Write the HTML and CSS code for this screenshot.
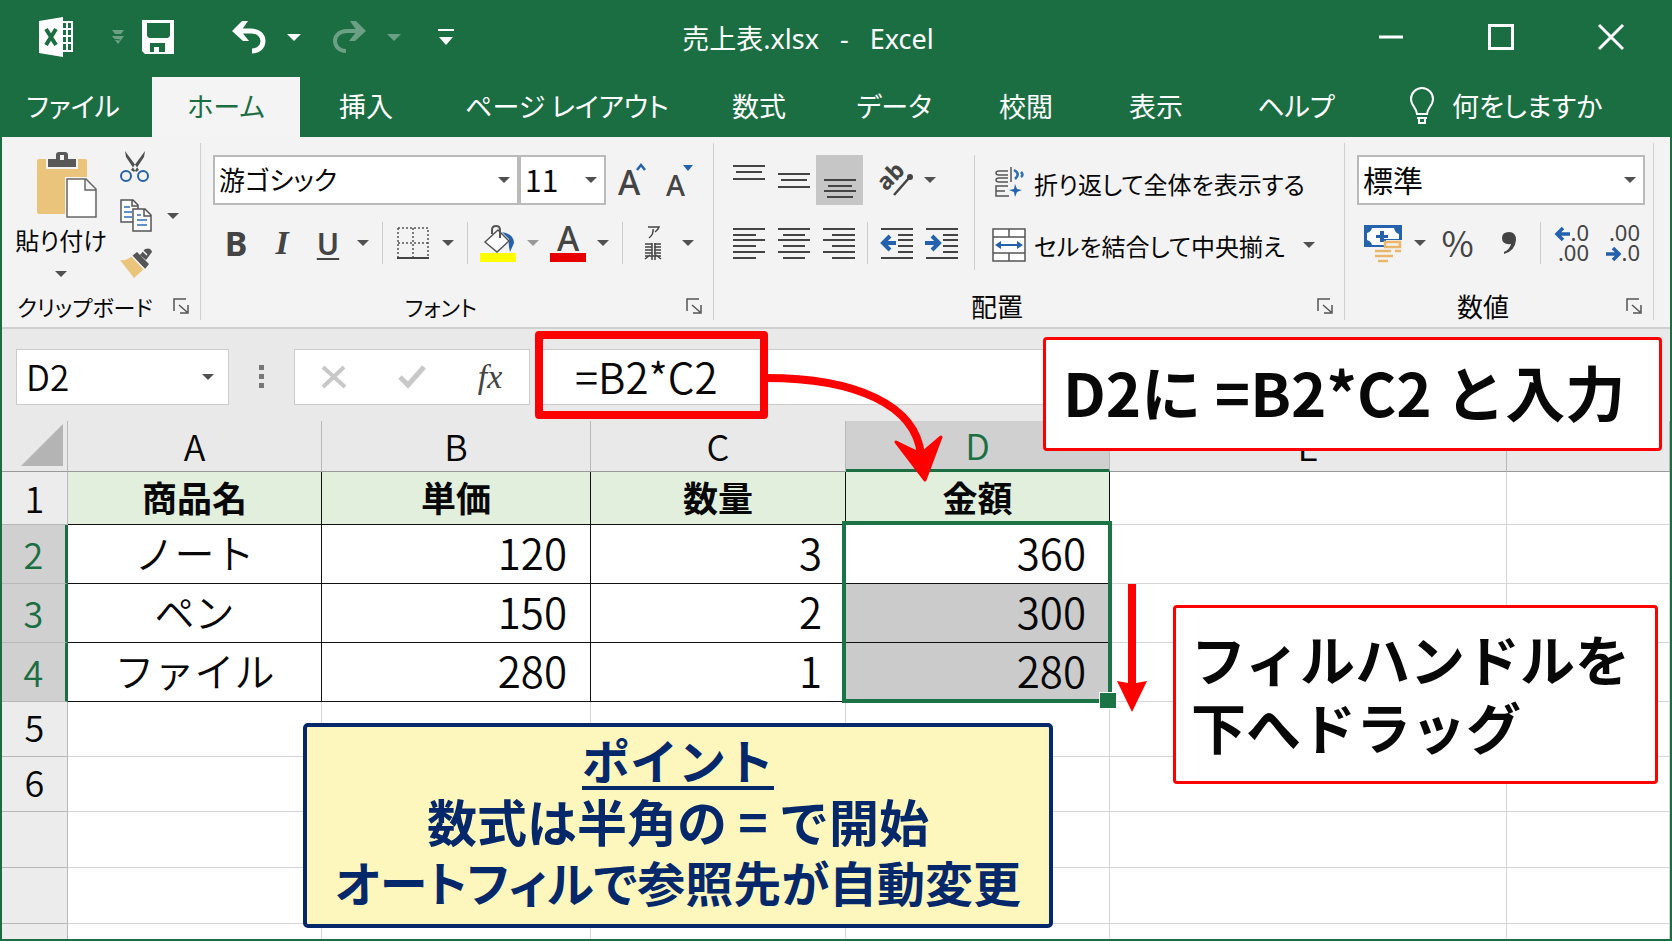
FILE: index.html
```
<!DOCTYPE html>
<html lang="ja">
<head>
    <meta charset="UTF-8">
    <meta name="viewport" content="width=device-width, initial-scale=1.0">
    <title>売上表.xlsx - Excel</title>
    <link rel="stylesheet" href="styles.css">
</head>
<body>
    <div class="app">
        <header class="titlebar">
            <div class="quick-access">
                <svg class="excel-logo" width="34" height="40" viewBox="0 0 34 40">
                    <path fill="#fff" d="M0 4L24 0v40L0 36z"/>
                    <path fill="none" stroke="#fff" stroke-width="2" d="M24 5h9v29h-9M28 5v29M24 12h8M24 19h8M24 26h8"/>
                    <path fill="none" stroke="#1b6e42" stroke-width="4" d="M7 12l10 16M17 12L7 28"/>
                </svg>
                <svg class="faint" width="14" height="16" viewBox="0 0 14 16">
                    <path fill="#fff" d="M1 1h12l-3 4H4zM1 7h12l-6 8z"/>
                    <path stroke="#1b6e42" d="M1 10l8 1"/>
                </svg>
                <button type="button" class="qa-btn save" aria-label="上書き保存">
                    <svg width="34" height="34" viewBox="0 0 34 34">
                        <path fill="#fff" fill-rule="evenodd" d="M1 0h32v34H4l-3-3zM6 3v13l2 2h19l2-2V3zM9 23v9h4v-5h5v5h6v-9z"/>
                    </svg>
                </button>
                <button type="button" class="qa-btn undo" aria-label="元に戻す">
                    <svg width="34" height="34" viewBox="0 0 34 34">
                        <path fill="none" stroke="#fff" stroke-width="5" d="M4 11h15c8 0 12 5 12 10s-4 10-11 10"/>
                        <path fill="#fff" d="M0 11L10 1h6l-7 10 8 10h-6z"/>
                    </svg>
                </button>
                <button type="button" class="caret light" aria-label="元に戻すの一覧"></button>
                <button type="button" class="qa-btn redo faint" aria-label="やり直し">
                    <svg width="34" height="34" viewBox="0 0 34 34">
                        <path fill="none" stroke="#fff" stroke-width="4" d="M30 11H15C7 11 3 16 3 21s4 10 11 10"/>
                        <path fill="#fff" d="M34 11L24 1h-6l7 10-8 10h6z"/>
                    </svg>
                </button>
                <button type="button" class="caret light faint" aria-label="やり直しの一覧"></button>
                <button type="button" class="qa-btn customize" aria-label="クイック アクセスのカスタマイズ">
                    <svg width="16" height="18" viewBox="0 0 16 18"><path fill="#fff" d="M0 1h16v2H0zM1 9h14l-7 8z"/></svg>
                </button>
            </div>
            <h1 class="doc-title">売上表.xlsx&nbsp;&nbsp; -&nbsp;&nbsp; Excel</h1>
            <div class="window-controls">
                <button type="button" aria-label="最小化">
                    <svg width="26" height="26" viewBox="0 0 26 26"><path stroke="#fff" stroke-width="3" d="M1 13h24"/></svg>
                </button>
                <button type="button" aria-label="最大化">
                    <svg width="26" height="26" viewBox="0 0 26 26"><rect x="1.5" y="1.5" width="23" height="23" fill="none" stroke="#fff" stroke-width="3"/></svg>
                </button>
                <button type="button" aria-label="閉じる">
                    <svg width="26" height="26" viewBox="0 0 26 26"><path stroke="#fff" stroke-width="3" d="M1 1l24 24M25 1L1 25"/></svg>
                </button>
            </div>
        </header>

        <nav class="tabs">
            <a href="#file" class="file">ファイル</a>
            <a href="#home" class="active">ホーム</a>
            <a href="#insert">挿入</a>
            <a href="#layout">ページ レイアウト</a>
            <a href="#formulas">数式</a>
            <a href="#data">データ</a>
            <a href="#review">校閲</a>
            <a href="#view">表示</a>
            <a href="#help">ヘルプ</a>
            <a href="#tellme" class="tell-me">
                <svg width="24" height="38" viewBox="0 0 24 38" fill="none" stroke="#fff" stroke-width="2">
                    <path d="M7 27c0-6-6-8-6-15a11 11 0 0 1 22 0c0 7-6 9-6 15zM7 31h10M9 32v4h6v-4"/>
                </svg>
                何をしますか
            </a>
        </nav>

        <div class="ribbon">
            <section class="group clipboard">
                <div class="clip-tools">
                    <button type="button" class="paste">
                        <svg width="60" height="66" viewBox="0 0 60 66">
                            <rect x="0" y="7" width="50" height="55" rx="2" fill="#ebc47c"/>
                            <path fill="#f3f3f3" d="M9 5h32v12H9zM28 25h32v41H28z"/>
                            <path fill="#595959" fill-rule="evenodd" d="M11 7h8V3q0-3 3-3h6q3 0 3 3v4h8v8H11zM23 3v5h4V3z"/>
                            <path fill="#fff" stroke="#666" stroke-width="1.5" d="M30 27h19l10 10v28H30zM48 27v11h11"/>
                        </svg>
                        <span>貼り付け</span>
                        <i class="tri"></i>
                    </button>
                    <div class="clip-side">
                        <button type="button" aria-label="切り取り">
                            <svg width="30" height="32" viewBox="0 0 30 32">
                                <path fill="#505050" d="M5 0l14 19-3 2L6 6zM25 0L11 19l3 2L24 6z"/>
                                <circle cx="6" cy="25" r="5" fill="none" stroke="#2562ad" stroke-width="2"/>
                                <circle cx="23" cy="25" r="5" fill="none" stroke="#2562ad" stroke-width="2"/>
                            </svg>
                        </button>
                        <div class="copy-row">
                            <button type="button" aria-label="コピー">
                                <svg width="32" height="33" viewBox="0 0 32 33">
                                    <path fill="#fff" stroke="#555" stroke-width="1.5" d="M1 1h12l5 5v17H1zM12 1v6h6"/>
                                    <path stroke="#2f6eb5" stroke-width="1.5" d="M4 8h6M4 13h8M4 18h8"/>
                                    <path fill="#fff" stroke="#555" stroke-width="1.5" d="M13 10h12l6 6v16H13zM24 10v7h7"/>
                                    <path stroke="#2f6eb5" stroke-width="1.5" d="M17 16h4M17 21h10M17 26h10"/>
                                </svg>
                            </button>
                            <button type="button" class="caret" aria-label="コピーの種類"></button>
                        </div>
                        <button type="button" aria-label="書式のコピー/貼り付け">
                            <svg width="32" height="30" viewBox="0 0 32 30">
                                <path fill="#ebc47c" d="M0 12q7 1 12-4l12 13-10 9z"/>
                                <path fill="#555" d="M12 8l5-4 12 12-4 5zM20 7l5-6q6-2 7 3l-6 8z"/>
                                <path stroke="#f3f3f3" stroke-width="1.5" d="M11 7l14 15M23 3l4 4"/>
                            </svg>
                        </button>
                    </div>
                </div>
                <div class="group-footer">
                    <span>クリップボード</span>
                    <button type="button" class="launcher" aria-label="クリップボードの詳細">
                        <svg width="16" height="16" viewBox="0 0 16 16"><path fill="none" stroke="#555" stroke-width="1.5" d="M1 13V1h12M6 7l8 7M15 7v8H7"/></svg>
                    </button>
                </div>
            </section>

            <section class="group font">
                <div class="row">
                    <div class="select-box font-name">
                        <select aria-label="フォント"><option>游ゴシック</option><option>メイリオ</option></select>
                    </div>
                    <div class="select-box font-size">
                        <select aria-label="フォント サイズ"><option>11</option><option>12</option></select>
                    </div>
                    <button type="button" class="icon-btn" aria-label="フォント サイズの拡大">
                        <svg width="32" height="38" viewBox="0 0 32 38">
                            <text x="1" y="34" class="svg-letter" font-size="34">A</text>
                            <path fill="none" stroke="#2562ad" stroke-width="2.5" d="M20 9l4-5 4 5"/>
                        </svg>
                    </button>
                    <button type="button" class="icon-btn" aria-label="フォント サイズの縮小">
                        <svg width="32" height="38" viewBox="0 0 32 38">
                            <text x="3" y="35" class="svg-letter" font-size="29">A</text>
                            <path fill="#2562ad" d="M20 4h10l-5 6z"/>
                        </svg>
                    </button>
                </div>
                <div class="row">
                    <button type="button" class="icon-btn bold">B</button>
                    <button type="button" class="icon-btn italic">I</button>
                    <button type="button" class="icon-btn underline">U</button>
                    <button type="button" class="caret" aria-label="下線の種類"></button>
                    <i class="sep"></i>
                    <button type="button" class="icon-btn" aria-label="罫線">
                        <svg width="32" height="33" viewBox="0 0 32 33">
                            <path fill="none" stroke="#555" stroke-width="1.5" stroke-dasharray="2 2" d="M1 1h30v30M1 1v30M16 1v30M1 16h30"/>
                            <path stroke="#444" stroke-width="2" d="M0 31h32"/>
                        </svg>
                    </button>
                    <button type="button" class="caret" aria-label="罫線の種類"></button>
                    <i class="sep"></i>
                    <button type="button" class="icon-btn" aria-label="塗りつぶしの色">
                        <svg width="36" height="37" viewBox="0 0 36 37">
                            <path fill="#ff0" d="M0 28h36v9H0z"/>
                            <path fill="#2562ad" d="M22 7q12 2 12 11l-4 9q-2-9-1-13z"/>
                            <path fill="#fff" stroke="#555" stroke-width="1.5" d="M5 17L18 5l11 11-12 11z"/>
                            <path fill="none" stroke="#555" stroke-width="2" d="M12 9V5q0-4 4-4t4 4v8"/>
                        </svg>
                    </button>
                    <button type="button" class="caret dim" aria-label="塗りつぶしの色の一覧"></button>
                    <button type="button" class="icon-btn" aria-label="フォントの色">
                        <svg width="36" height="37" viewBox="0 0 36 37">
                            <path fill="#e80000" d="M0 28h36v9H0z"/>
                            <text x="7" y="26" class="svg-letter" font-size="34">A</text>
                        </svg>
                    </button>
                    <button type="button" class="caret" aria-label="フォントの色の一覧"></button>
                    <i class="sep"></i>
                    <button type="button" class="icon-btn" aria-label="ふりがなの表示">
                        <svg width="18" height="36" viewBox="0 0 18 36" fill="none" stroke="#444" stroke-width="1.5">
                            <path d="M4 2h11q-1 3-4 5M9 4q1 5-4 9"/>
                            <path d="M1 19h7M1 22h7M1 25h7M1 28h7M10 19h7M10 22h7M10 25h7M10 28h7M8 18v17M11 18v17M1 34l5-4M17 34l-5-4M1 31h16"/>
                        </svg>
                    </button>
                    <button type="button" class="caret" aria-label="ふりがなの設定"></button>
                </div>
                <div class="group-footer">
                    <span>フォント</span>
                    <button type="button" class="launcher" aria-label="フォントの詳細">
                        <svg width="16" height="16" viewBox="0 0 16 16"><path fill="none" stroke="#555" stroke-width="1.5" d="M1 13V1h12M6 7l8 7M15 7v8H7"/></svg>
                    </button>
                </div>
            </section>

            <section class="group align">
                <div class="align-tools">
                    <div class="align-left">
                        <div class="row">
                            <button type="button" class="icon-btn" aria-label="上揃え">
                                <svg width="32" height="40" viewBox="0 0 32 40"><path class="lines" d="M0 6h32M3 12h26M0 19h32"/></svg>
                            </button>
                            <button type="button" class="icon-btn" aria-label="上下中央揃え">
                                <svg width="32" height="40" viewBox="0 0 32 40"><path class="lines" d="M0 14h32M3 20h26M0 27h32"/></svg>
                            </button>
                            <button type="button" class="icon-btn pressed" aria-label="下揃え">
                                <svg width="32" height="40" viewBox="0 0 32 40"><path class="lines" d="M0 20h32M4 26h24M0 31h32M3 37h26"/></svg>
                            </button>
                            <button type="button" class="icon-btn orient" aria-label="方向">
                                <svg width="36" height="32" viewBox="0 0 36 32">
                                    <text x="4" y="26" class="svg-letter heavy" font-size="23" transform="rotate(-45 8 22)">ab</text>
                                    <path stroke="#444" stroke-width="2.5" d="M16 31l15-17"/>
                                    <circle cx="32" cy="13" r="3" fill="#444"/>
                                </svg>
                            </button>
                            <button type="button" class="caret" aria-label="方向の一覧"></button>
                        </div>
                        <div class="row">
                            <button type="button" class="icon-btn" aria-label="左揃え">
                                <svg width="32" height="32" viewBox="0 0 32 32"><path class="lines" d="M0 2h32M0 8h23M0 13h32M0 19h23M0 25h32M0 31h23"/></svg>
                            </button>
                            <button type="button" class="icon-btn" aria-label="中央揃え">
                                <svg width="32" height="32" viewBox="0 0 32 32"><path class="lines" d="M0 2h32M5 8h22M0 13h32M5 19h22M0 25h32M5 31h22"/></svg>
                            </button>
                            <button type="button" class="icon-btn" aria-label="右揃え">
                                <svg width="32" height="32" viewBox="0 0 32 32"><path class="lines" d="M0 2h32M9 8h23M0 13h32M9 19h23M0 25h32M9 31h23"/></svg>
                            </button>
                            <i class="sep"></i>
                            <button type="button" class="icon-btn" aria-label="インデントを減らす">
                                <svg width="34" height="32" viewBox="0 0 34 32">
                                    <path class="lines" d="M1 2h32M18 8h15M18 13h15M18 19h15M18 25h15M1 31h32"/>
                                    <path fill="none" stroke="#2562ad" stroke-width="4" d="M16 16H3M10 9l-7 7 7 7"/>
                                </svg>
                            </button>
                            <button type="button" class="icon-btn" aria-label="インデントを増やす">
                                <svg width="34" height="32" viewBox="0 0 34 32">
                                    <path class="lines" d="M1 2h32M18 8h15M18 13h15M18 19h15M18 25h15M1 31h32"/>
                                    <path fill="none" stroke="#2562ad" stroke-width="4" d="M0 16h13M7 9l7 7-7 7"/>
                                </svg>
                            </button>
                        </div>
                    </div>
                    <div class="align-right">
                        <button type="button" class="text-btn">
                            <svg width="34" height="32" viewBox="0 0 34 32" fill="none" stroke="#555" stroke-width="1.5">
                                <path d="M16 4H7q-3 0-3 2t3 2h9M16 11H7q-3 0-3 2t3 2h9M19 0v15M16 19H4v10h13M4 24h9"/>
                                <path stroke="#2f6eb5" stroke-width="2.5" d="M22 3q7 4 1 9M29 5q3 3 0 5"/>
                                <path fill="#2562ad" stroke="none" d="M23 17l2 5 5 1-5 2-2 5-1-5-5-2 5-1z"/>
                            </svg>
                            折り返して全体を表示する
                        </button>
                        <div class="merge-row">
                            <button type="button" class="text-btn">
                                <svg width="34" height="34" viewBox="0 0 34 34">
                                    <path fill="#fff" stroke="#555" stroke-width="1.5" d="M1 1h32v32H1zM1 9h32M1 25h32M17 1v8M17 25v8"/>
                                    <path fill="#2562ad" d="M3 17l6-4v3h16v-3l6 4-6 4v-3H9v3z"/>
                                </svg>
                                セルを結合して中央揃え
                            </button>
                            <button type="button" class="caret" aria-label="結合の種類"></button>
                        </div>
                    </div>
                </div>
                <div class="group-footer">
                    <span>配置</span>
                    <button type="button" class="launcher" aria-label="配置の詳細">
                        <svg width="16" height="16" viewBox="0 0 16 16"><path fill="none" stroke="#555" stroke-width="1.5" d="M1 13V1h12M6 7l8 7M15 7v8H7"/></svg>
                    </button>
                </div>
            </section>

            <section class="group number">
                <div class="row">
                    <div class="select-box number-format">
                        <select aria-label="表示形式"><option>標準</option><option>通貨</option></select>
                    </div>
                </div>
                <div class="row">
                    <button type="button" class="icon-btn" aria-label="通貨表示形式">
                        <svg width="38" height="37" viewBox="0 0 38 37">
                            <path fill="#2562ad" d="M0 0h38v15H22v7H0z"/>
                            <path fill="#fff" d="M8 3h22q1 5 5 6v5H20v6H8q-1-4-5-5V8q4-1 5-5z"/>
                            <path fill="#2562ad" d="M16 6h4v4h4v3h-4v4h-4v-4h-4v-3h4z"/>
                            <path fill="none" stroke="#ebb669" stroke-width="2.5" d="M21 17h15v5H21zM11 26h16M31 26h6M11 31h18M14 36h10"/>
                        </svg>
                    </button>
                    <button type="button" class="caret" aria-label="通貨の一覧"></button>
                    <button type="button" class="icon-btn percent">%</button>
                    <button type="button" class="icon-btn" aria-label="桁区切りスタイル">
                        <svg width="16" height="24" viewBox="0 0 16 24"><path fill="#444" d="M8 1q7 0 7 8-1 11-12 14v-2q6-3 7-8-9 1-9-6 0-6 7-6z"/></svg>
                    </button>
                    <i class="sep"></i>
                    <button type="button" class="icon-btn" aria-label="小数点以下の表示桁数を増やす">
                        <svg width="36" height="38" viewBox="0 0 36 38" class="decimals">
                            <text x="34" y="17" text-anchor="end">.0</text>
                            <text x="34" y="37" text-anchor="end">.00</text>
                            <path fill="none" stroke="#2562ad" stroke-width="3.5" d="M15 10H2M8 4l-6 6 6 6"/>
                        </svg>
                    </button>
                    <button type="button" class="icon-btn" aria-label="小数点以下の表示桁数を減らす">
                        <svg width="36" height="38" viewBox="0 0 36 38" class="decimals">
                            <text x="34" y="17" text-anchor="end">.00</text>
                            <text x="34" y="37" text-anchor="end">.0</text>
                            <path fill="none" stroke="#2562ad" stroke-width="3.5" d="M0 30h13M7 24l6 6-6 6"/>
                        </svg>
                    </button>
                </div>
                <div class="group-footer">
                    <span>数値</span>
                    <button type="button" class="launcher" aria-label="数値の詳細">
                        <svg width="16" height="16" viewBox="0 0 16 16"><path fill="none" stroke="#555" stroke-width="1.5" d="M1 13V1h12M6 7l8 7M15 7v8H7"/></svg>
                    </button>
                </div>
            </section>
        </div>

        <div class="formula-bar">
            <div class="name-box">
                <input type="text" value="D2" aria-label="名前ボックス">
                <button type="button" class="caret" aria-label="名前の一覧"></button>
            </div>
            <div class="grip"><i></i><i></i><i></i></div>
            <div class="formula-actions">
                <button type="button" aria-label="キャンセル">
                    <svg width="24" height="24" viewBox="0 0 24 24"><path stroke="#c8c8c8" stroke-width="4" d="M1 2l22 20M22 2L1 22"/></svg>
                </button>
                <button type="button" aria-label="入力">
                    <svg width="28" height="24" viewBox="0 0 28 24"><path fill="none" stroke="#c8c8c8" stroke-width="5" d="M2 12l8 8L26 2"/></svg>
                </button>
                <button type="button" class="fx" aria-label="関数の挿入">fx</button>
            </div>
            <input type="text" class="formula-input" value="=B2*C2" aria-label="数式バー">
        </div>

        <div class="sheet">
            <table>
                <colgroup>
                    <col class="c-head"><col class="c-a"><col class="c-b"><col class="c-c"><col class="c-d"><col class="c-e"><col>
                </colgroup>
                <thead>
                    <tr>
                        <th class="corner"><svg width="42" height="42" viewBox="0 0 42 42"><path fill="#b4b4b4" d="M42 0v42H0z"/></svg></th>
                        <th>A</th><th>B</th><th>C</th><th class="on">D</th><th>E</th><th></th>
                    </tr>
                </thead>
                <tbody>
                    <tr class="r1 labels data">
                        <th>1</th><td>商品名</td><td>単価</td><td>数量</td><td>金額</td><td></td><td></td>
                    </tr>
                    <tr class="r2 data">
                        <th class="on">2</th><td class="name">ノート</td><td>120</td><td>3</td><td>360</td><td></td><td></td>
                    </tr>
                    <tr class="r2 data">
                        <th class="on">3</th><td class="name">ペン</td><td>150</td><td>2</td><td class="picked">300</td><td></td><td></td>
                    </tr>
                    <tr class="r2 data">
                        <th class="on">4</th><td class="name">ファイル</td><td>280</td><td>1</td><td class="picked">280</td><td></td><td></td>
                    </tr>
                    <tr class="r5"><th>5</th><td></td><td></td><td></td><td></td><td></td><td></td></tr>
                    <tr class="r5"><th>6</th><td></td><td></td><td></td><td></td><td></td><td></td></tr>
                    <tr class="r7"><th></th><td></td><td></td><td></td><td></td><td></td><td></td></tr>
                    <tr class="r7"><th></th><td></td><td></td><td></td><td></td><td></td><td></td></tr>
                    <tr class="r7"><th></th><td></td><td></td><td></td><td></td><td></td><td></td></tr>
                </tbody>
            </table>
            <div class="selection"><i class="fill-handle"></i></div>
            <svg class="drag-arrow" width="32" height="128" viewBox="0 0 32 128">
                <path fill="#f00" d="M12 0h8v99l11-2-15 31L1 97l11 2z"/>
            </svg>
            <p class="note drag-note">フィルハンドルを<br>下へドラッグ</p>
            <div class="point">
                <h2>ポイント</h2>
                <p>数式は半角の = で開始</p>
                <p class="tight">オートフィルで参照先が自動変更</p>
            </div>
        </div>

        <div class="formula-frame"></div>
        <svg class="formula-arrow" width="180" height="120" viewBox="0 0 180 120">
            <path fill="none" stroke="#f00" stroke-width="8" d="M0 15C90 15 150 42 155 92"/>
            <path fill="#f00" stroke="#f00" stroke-width="3" stroke-linejoin="round" d="M130 79l25 12 20-17-16 43z"/>
        </svg>
        <p class="note formula-note">D2に =B2*C2 と入力</p>
    </div>
</body>
</html>
```
FILE: styles.css
```
* {
    margin: 0;
    padding: 0;
    box-sizing: border-box;
}

body {
    font-family: "Noto Sans CJK JP", sans-serif;
    color: #080808;
    background: #fff;
}

button,
input,
select {
    font-family: inherit;
    color: inherit;
    border: none;
    background: none;
}

button {
    display: flex;
    align-items: center;
    justify-content: center;
    cursor: pointer;
}

svg {
    display: block;
    flex-shrink: 0;
    overflow: visible;
}

.app {
    position: relative;
    display: flex;
    flex-direction: column;
    height: 100vh;
    overflow: hidden;
    border: 2px solid #1b6e42;
    border-top: none;
}

/* title bar */
.titlebar {
    display: grid;
    grid-template-columns: 478fr 656fr 534fr;
    align-items: center;
    height: 77px;
    padding-bottom: 3px;
    background: #1b6e42;
    color: #fff;
}

.quick-access {
    display: flex;
    align-items: center;
    padding-left: 37px;
}

.faint {
    opacity: 0.35;
}

.excel-logo {
    margin-right: 38px;
}

.save {
    margin-left: 16px;
}

.undo {
    margin-left: 57px;
}

.redo {
    margin-left: 10px;
}

.customize {
    margin-left: 16px;
}

.doc-title {
    font-family: "Noto Sans", "Noto Sans CJK JP", sans-serif;
    font-size: 27px;
    font-weight: 400;
    text-align: center;
    white-space: nowrap;
}

.window-controls {
    display: flex;
    justify-content: flex-end;
    gap: 84px;
    padding-right: 46px;
}

/* small drop-down arrows */
.caret {
    width: 24px;
    height: 32px;
}

.caret::before,
.tri,
.select-box::after {
    content: "";
    border: 6px solid transparent;
    border-top-color: #505050;
    border-bottom: none;
}

.caret.light::before {
    border-width: 7px;
    border-top-color: #fff;
    border-bottom: none;
}

.caret.light {
    width: 56px;
}

.caret.dim::before {
    border-top-color: #999;
}

/* ribbon tabs */
.tabs {
    display: grid;
    grid-template-columns: 150fr 148fr 132fr 270fr 114fr 156fr 108fr 152fr 128fr 310fr;
    height: 60px;
    background: #1b6e42;
}

.tabs a {
    display: flex;
    align-items: center;
    justify-content: center;
    padding-bottom: 2px;
    font-size: 27px;
    font-feature-settings: "palt";
    line-height: 58px;
    color: #fff;
    text-decoration: none;
    white-space: nowrap;
}

.tabs .file {
    padding-right: 8px;
}

.tabs .active {
    background: #f4f4f4;
    color: #1b6e42;
}

.tabs .tell-me {
    justify-content: flex-start;
    gap: 18px;
    padding-left: 50px;
}

/* ribbon */
.ribbon {
    display: flex;
    flex-shrink: 0;
    height: 192px;
    padding-top: 6px;
    background: #f3f3f3;
    border-bottom: 2px solid #d0d0d0;
}

.group {
    display: flex;
    flex-direction: column;
    flex-shrink: 0;
    height: 177px;
    padding-top: 12px;
    border-right: 1px solid #d0d0d0;
}

.clipboard {
    width: 199px;
    padding-top: 8px;
}

.font {
    width: 513px;
}

.align {
    width: 631px;
}

.number {
    width: 309px;
}

.row {
    display: flex;
    align-items: center;
    height: 50px;
    margin-bottom: 13px;
    padding-left: 12px;
}

.icon-btn {
    width: 46px;
    height: 50px;
}

.sep {
    width: 1px;
    height: 42px;
    margin: 0 7px;
    background: #ccc;
}

.group-footer {
    display: flex;
    align-items: center;
    height: 28px;
    margin-top: auto;
    font-size: 22px;
    font-feature-settings: "palt";
    line-height: 28px;
}

.group-footer span {
    flex: 1;
    text-align: center;
}

.align .group-footer,
.number .group-footer {
    font-size: 26px;
}

.align .group-footer span {
    padding-right: 32px;
}

.launcher {
    width: 32px;
    height: 28px;
    padding-right: 6px;
}

.clip-tools {
    display: flex;
}

.paste {
    flex-direction: column;
    width: 118px;
    font-size: 24px;
    font-feature-settings: "palt";
    line-height: 36px;
}

.paste svg {
    margin-left: 12px;
    margin-bottom: 4px;
}

.paste .tri {
    margin-top: 13px;
}

.clip-side {
    display: flex;
    flex-direction: column;
    align-items: flex-start;
    gap: 16px;
}

.copy-row {
    display: flex;
    align-items: center;
    gap: 9px;
}

.select-box {
    display: flex;
    align-items: center;
    height: 50px;
    padding-right: 7px;
    background: #fff;
    border: 2px solid #bababa;
}

.select-box select {
    flex: 1;
    min-width: 0;
    height: 46px;
    padding-left: 4px;
    padding-bottom: 2px;
    appearance: none;
    font-size: 30px;
    font-feature-settings: "palt";
    line-height: 44px;
}

.font-name {
    width: 306px;
}

.select-box.font-name select {
    font-size: 26px;
}

.font-size {
    width: 87px;
    margin-right: 4px;
}

.number-format {
    width: 288px;
}

.svg-letter {
    font-family: "Noto Sans", sans-serif;
    font-weight: 500;
    fill: #444;
}

.svg-letter.heavy {
    font-weight: 700;
}

.bold,
.italic,
.underline {
    font-family: "Noto Sans", sans-serif;
    font-size: 34px;
    font-weight: 700;
    color: #444;
}

.italic {
    font-family: "Liberation Serif", serif;
    font-style: italic;
}

.underline {
    font-size: 30px;
    font-weight: 600;
    text-decoration: underline;
    text-decoration-thickness: 2px;
    text-underline-offset: 3px;
}

.align-tools {
    display: flex;
}

.align-left {
    width: 260px;
}

.align .icon-btn {
    width: 45px;
}

.align .sep {
    margin: 0 6px;
}

.align .pressed {
    width: 47px;
    background: #c6c6c6;
}

.align .orient {
    margin-left: 10px;
}

.lines {
    fill: none;
    stroke: #444;
    stroke-width: 2;
    shape-rendering: crispEdges;
}

.align-right {
    height: 115px;
    padding: 6px 0 6px 17px;
    border-left: 1px solid #d0d0d0;
}

.text-btn {
    gap: 8px;
    height: 44px;
    font-size: 24px;
    font-feature-settings: "palt";
    white-space: nowrap;
}

.merge-row {
    display: flex;
    align-items: center;
    gap: 12px;
    margin-top: 18px;
}

.number .icon-btn {
    width: 51px;
}

.number .sep {
    margin: 0 6px;
}

.number .percent {
    padding-bottom: 4px;
    font-size: 35px;
    color: #444;
}

.decimals text {
    font-family: "Noto Sans", sans-serif;
    font-size: 22px;
    fill: #444;
}

/* formula bar */
.formula-bar {
    display: flex;
    flex-shrink: 0;
    height: 92px;
    padding: 20px 12px 0 14px;
    background: #e9e9e9;
}

.name-box,
.formula-actions,
.formula-input {
    height: 56px;
    background: #fff;
    border: 1px solid #ccc;
}

.name-box {
    display: flex;
    align-items: center;
    width: 213px;
    padding-right: 8px;
}

.name-box input {
    flex: 1;
    min-width: 0;
    height: 54px;
    padding-left: 9px;
    padding-bottom: 4px;
    font-size: 35px;
    font-weight: 350;
}

.grip {
    display: flex;
    flex-direction: column;
    align-items: center;
    justify-content: center;
    gap: 4px;
    width: 65px;
    height: 54px;
}

.grip i {
    width: 5px;
    height: 5px;
    background: #777;
}

.formula-actions {
    display: flex;
    width: 236px;
    margin-right: 6px;
}

.formula-actions button {
    flex: 1;
}

.fx {
    font-family: "Liberation Serif", serif;
    font-size: 34px;
    font-style: italic;
    color: #444;
}

.formula-input {
    flex: 1;
    min-width: 0;
    padding-left: 38px;
    padding-bottom: 4px;
    font-size: 42px;
    font-weight: 350;
}

/* sheet */
.sheet {
    position: relative;
    flex: 1;
    min-height: 0;
    overflow: hidden;
}

table {
    width: 100%;
    table-layout: fixed;
    border-collapse: separate;
    border-spacing: 0;
}

.c-head {
    width: 66px;
}

.c-a {
    width: 254px;
}

.c-b {
    width: 269px;
}

.c-c {
    width: 255px;
}

.c-d {
    width: 264px;
}

.c-e {
    width: 397px;
}

th,
td {
    padding-bottom: 2px;
    line-height: 40px;
    border-right: 1px solid #d6d6d6;
    border-bottom: 1px solid #d6d6d6;
}

th {
    font-size: 36px;
    font-weight: 350;
    background: #ececec;
    border-color: #b8b8b8;
}

thead th {
    height: 51px;
    background: #e9e9e9;
    border-bottom-color: #999;
}

.corner svg {
    margin-left: 19px;
}

th.on {
    color: #1b6e42;
    background: #d0d0d0;
}

thead th.on {
    border-bottom: 3px solid #1b6e42;
}

tbody th.on {
    border-right: 3px solid #1b6e42;
}

.r1 th {
    height: 53px;
}

.r2 th {
    height: 59px;
}

.r5 th {
    height: 55px;
    padding-bottom: 6px;
}

.r7 th {
    height: 56px;
}

.data td {
    padding-right: 23px;
    padding-bottom: 5px;
    font-size: 42px;
    font-weight: 350;
    text-align: right;
}

.data td:nth-child(-n+5) {
    border-color: #111;
}

.data .name {
    padding-right: 0;
    font-size: 40px;
    text-align: center;
}

.data.labels td {
    padding-right: 0;
    padding-bottom: 2px;
    font-size: 35px;
    font-weight: 700;
    text-align: center;
}

.labels td:nth-child(-n+5) {
    background: #e3efdd;
}

.picked {
    background: #cbcbcb;
}

.selection {
    position: absolute;
    left: 840px;
    top: 100px;
    width: 270px;
    height: 182px;
    border: 4px solid #1b7445;
}

.fill-handle {
    position: absolute;
    right: -9px;
    bottom: -10px;
    width: 18px;
    height: 17px;
    background: #1b7445;
    border: 1px solid #fff;
}

/* annotations */
.formula-frame {
    position: absolute;
    left: 533px;
    top: 331px;
    width: 233px;
    height: 88px;
    border: 8px solid #f00;
    border-radius: 4px;
}

.formula-arrow {
    position: absolute;
    left: 764px;
    top: 363px;
}

.note {
    position: absolute;
    background: #fff;
    border: 3px solid #f00;
    border-radius: 4px;
    font-size: 55px;
    font-weight: 700;
    line-height: 68px;
    white-space: nowrap;
}

.formula-note {
    right: 8px;
    top: 337px;
    width: 619px;
    padding: 17px 0 23px 17px;
    font-size: 60px;
}

.drag-note {
    left: 1171px;
    top: 184px;
    width: 485px;
    padding: 15px 0 22px 15px;
}

.drag-arrow {
    position: absolute;
    left: 1114px;
    top: 163px;
}

.point {
    position: absolute;
    left: 301px;
    top: 302px;
    width: 750px;
    height: 205px;
    padding-top: 2px;
    background: #fdf7bd;
    border: 4px solid #04286a;
    border-radius: 5px;
    color: #04286a;
    font-size: 50px;
    font-weight: 700;
    line-height: 61px;
    text-align: center;
}

.point h2,
.point .tight {
    font-size: 48px;
}

.point h2 {
    text-decoration: underline;
    text-decoration-thickness: 4px;
    text-underline-offset: 6px;
}

.point .tight {
    font-feature-settings: "palt";
}
```
